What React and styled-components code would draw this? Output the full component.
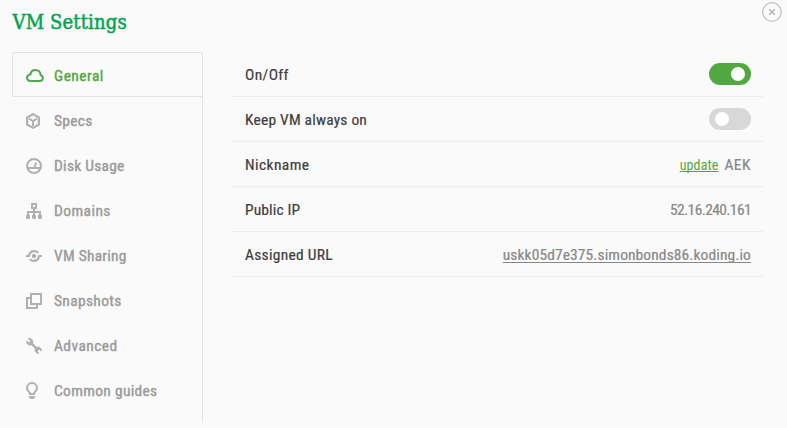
import React from 'react';
import styled, { createGlobalStyle } from 'styled-components';

const GlobalStyle = createGlobalStyle`
  * { box-sizing: border-box; }
  body {
    margin: 0;
    background: #fafafa;
    font-family: "Roboto Condensed", Roboto, "Liberation Sans", sans-serif;
  }
`;

const Modal = styled.main`
  height: 428px;
  background: #fafafa;
  overflow: hidden;
`;

const Header = styled.header`
  display: flex;
  justify-content: space-between;
  align-items: flex-start;
  height: 52px;
  padding: 2px 5px 0 12.5px;
`;

const Title = styled.h1`
  margin: 8px 0 0;
  font: 400 20px/24px "DejaVu Serif Condensed", "DejaVu Serif", serif;
  letter-spacing: 0.15px;
  color: #00a651;
  -webkit-text-stroke: 0.5px #00a651;
`;

const CloseButton = styled.button`
  display: flex;
  width: 20px;
  height: 20px;
  padding: 0;
  border: 0;
  background: none;
`;

const Body = styled.div`
  display: flex;
  align-items: flex-start;
  padding-left: 12px;
`;

const Sidebar = styled.nav`
  width: 191px;
  height: 370px;
  border-right: 1px solid #e4e4e4;
`;

const NavItem = styled.a`
  display: flex;
  align-items: center;
  height: 45px;
  padding: 3px 0 0 14px;
  color: ${(p) => (p.$active ? '#52a840' : '#9b9b9b')};
  ${(p) =>
    p.$active &&
    `
    padding: 2px 0 0 13px;
    border: 1px solid #e4e4e4;
    border-right: 0;
    border-radius: 2px 0 0 2px;
  `}
`;

const IconSlot = styled.span`
  display: flex;
  align-items: center;
  width: 28px;
  height: 20px;
  color: ${(p) => (p.$active ? '#4cab50' : '#b1b1b1')};

  svg { display: block; overflow: visible; }
`;

const NavLabel = styled.span`
  font-size: 15.5px;
  font-weight: 400;
  -webkit-text-stroke: 0.4px currentColor;
  line-height: 20px;
  white-space: nowrap;
  letter-spacing: ${(p) => p.$tracking}px;
`;

const Settings = styled.section`
  width: 531px;
  margin-left: 29px;
`;

const Row = styled.div`
  display: flex;
  align-items: center;
  justify-content: space-between;
  height: 45px;
  padding: 0 12px 0 13px;
  border-bottom: 1px solid #eeeeee;
`;

const RowText = styled.span`
  padding-top: 1px;
  font-size: 15.5px;
  line-height: 20px;
  -webkit-text-stroke: 0.2px currentColor;
  white-space: nowrap;
  letter-spacing: ${(p) => p.$tracking}px;
`;

const RowLabel = styled(RowText)`
  color: #3f3f3f;
`;

const Value = styled(RowText)`
  color: #888888;
`;

const ValueGroup = styled.div`
  display: flex;
  align-items: baseline;
  gap: 6px;
`;

const UpdateLink = styled.a`
  font-size: 14px;
  line-height: 20px;
  color: #52a840;
  letter-spacing: 0.1px;
  text-decoration: underline;
  text-decoration-skip-ink: none;
  text-underline-offset: 1px;
`;

const UrlLink = styled(Value).attrs({ as: 'a' })`
  text-decoration: underline;
  text-decoration-skip-ink: none;
  text-underline-offset: 2px;
`;

const Toggle = styled.span`
  display: flex;
  align-items: center;
  justify-content: ${(p) => (p.$on ? 'flex-end' : 'flex-start')};
  width: 42px;
  height: 22px;
  padding: 0 6px;
  border-radius: 11px;
  background: ${(p) => (p.$on ? '#52a840' : '#d8d8d8')};
`;

const Knob = styled.span`
  width: 14px;
  height: 14px;
  border-radius: 50%;
  background: #fff;
`;

const stroke = { fill: 'none', stroke: 'currentColor', strokeWidth: 2 };

const CloudIcon = () => (
  <svg width="18" height="13" viewBox="0 0 18 13">
    <path {...stroke} strokeWidth="2" strokeLinejoin="round" d="M4.2 12H14a3 3 0 0 0 .6-5.9C14.4 3 12.2 1 9.4 1 6.7 1 4.8 2.8 4.4 5.5A3.25 3.25 0 0 0 4.2 12Z" />
  </svg>
);

const BoxIcon = () => (
  <svg width="14" height="16" viewBox="0 0 14 16">
    <path {...stroke} strokeWidth="2.2" strokeLinejoin="round" d="M7 1.1l5.9 3.4v7L7 14.900l-5.9-3.400v-7z" />
    <path {...stroke} d="M3 5.7l4 2.3 4-2.3M7 8v5" />
  </svg>
);

const GaugeIcon = () => (
  <svg width="16" height="16" viewBox="0 0 16 16">
    <circle {...stroke} strokeWidth="2.1" cx="8" cy="8" r="6.95" />
    <path {...stroke} d="M2 10h12M8.4 9.5l1.900-5" />
  </svg>
);

const SitemapIcon = () => (
  <svg width="16" height="16" viewBox="0 0 16 16">
    <path {...stroke} d="M6 1h4v4H6zM8 5.5V13M2 13V9h12V13" />
    <path fill="currentColor" d="M0 12h4v3.200l-.8.8H.8l-.8-.8zM6 12h4v3.200l-.8.8H6.800l-.8-.8zM12 12h4v3.200l-.8.8h-2.400l-.8-.8z" />
  </svg>
);

const ShareIcon = () => (
  <svg width="16" height="12" viewBox="0 0 16 12">
    <circle cx="8" cy="6" r="2.2" fill="currentColor" />
    <path {...stroke} strokeWidth="2.2" d="M0 6h3C3.5 2.9 5.6 1.100 8.2 1.100c1.7 0 3 .6 4 1.800M16 6h-3c-.5 3.100-2.600 4.900-5.200 4.900-1.700 0-3-.6-4-1.800" />
  </svg>
);

const CopiesIcon = () => (
  <svg width="16" height="16" viewBox="0 0 16 16">
    <path {...stroke} d="M5 1h10v10H5zM5 5H1v10h10v-4" />
  </svg>
);

const WrenchIcon = () => (
  <svg width="16" height="16" viewBox="0 0 16 16">
    <path
      fill="currentColor"
      d="M1.9.3A4.200 4.200 0 0 1 7.200 5.500L10.500 8.800A4.200 4.200 0 0 1 16 12.900L14.800 13.200 13.600 11.800A1.700 1.700 0 0 0 11.800 13.600L13.200 14.900 12.900 16A4.200 4.200 0 0 1 8.800 10.500L5.500 7.200A4.200 4.200 0 0 1 0 3.100L1.100 2.800 2.500 4.200A1.700 1.700 0 0 0 4.200 2.500L1.800 1.100Z"
    />
  </svg>
);

const BulbIcon = () => (
  <svg width="12" height="18" viewBox="0 0 12 18">
    <path {...stroke} d="M4 12C4 9.800 1 8.800 1 5.900A5 5 0 0 1 11 5.900C11 8.800 8 9.800 8 12Z" />
    <path fill="currentColor" d="M3 14h6v1.200L7.500 17h-3L3 15.200z" />
  </svg>
);

const CloseIcon = () => (
  <svg width="20" height="20" viewBox="0 0 20 20" fill="none">
    <circle cx="10" cy="10" r="9.3" stroke="#c0c6ca" strokeWidth="1.3" />
    <path d="M7.200 7.200l5.600 5.600M12.800 7.200l-5.600 5.600" stroke="#b5b8ba" strokeWidth="1.6" />
  </svg>
);

const navItems = [
  { label: 'General', Icon: CloudIcon, tracking: 0.47, active: true },
  { label: 'Specs', Icon: BoxIcon, tracking: 0.27 },
  { label: 'Disk Usage', Icon: GaugeIcon, tracking: 0.24 },
  { label: 'Domains', Icon: SitemapIcon, tracking: 0.43 },
  { label: 'VM Sharing', Icon: ShareIcon, tracking: 0.24 },
  { label: 'Snapshots', Icon: CopiesIcon, tracking: 0.33 },
  { label: 'Advanced', Icon: WrenchIcon, tracking: 0.43 },
  { label: 'Common guides', Icon: BulbIcon, tracking: 0.31 },
];

export default function App() {
  return (
    <Modal>
      <GlobalStyle />
      <Header>
        <Title>VM Settings</Title>
        <CloseButton aria-label="Close"><CloseIcon /></CloseButton>
      </Header>
      <Body>
        <Sidebar>
          {navItems.map(({ label, Icon, tracking, active }) => (
            <NavItem key={label} $active={active}>
              <IconSlot $active={active}><Icon /></IconSlot>
              <NavLabel $tracking={tracking}>{label}</NavLabel>
            </NavItem>
          ))}
        </Sidebar>
        <Settings>
          <Row>
            <RowLabel $tracking={0.35}>On/Off</RowLabel>
            <Toggle $on><Knob /></Toggle>
          </Row>
          <Row>
            <RowLabel $tracking={0.2}>Keep VM always on</RowLabel>
            <Toggle><Knob /></Toggle>
          </Row>
          <Row>
            <RowLabel $tracking={0.4}>Nickname</RowLabel>
            <ValueGroup>
              <UpdateLink>update</UpdateLink>
              <Value $tracking={0.5}>AEK</Value>
            </ValueGroup>
          </Row>
          <Row>
            <RowLabel $tracking={0.12}>Public IP</RowLabel>
            <Value $tracking={-0.6}>52.16.240.161</Value>
          </Row>
          <Row>
            <RowLabel $tracking={0.28}>Assigned URL</RowLabel>
            <UrlLink $tracking={0.1}>uskk05d7e375.simonbonds86.koding.io</UrlLink>
          </Row>
        </Settings>
      </Body>
    </Modal>
  );
}
